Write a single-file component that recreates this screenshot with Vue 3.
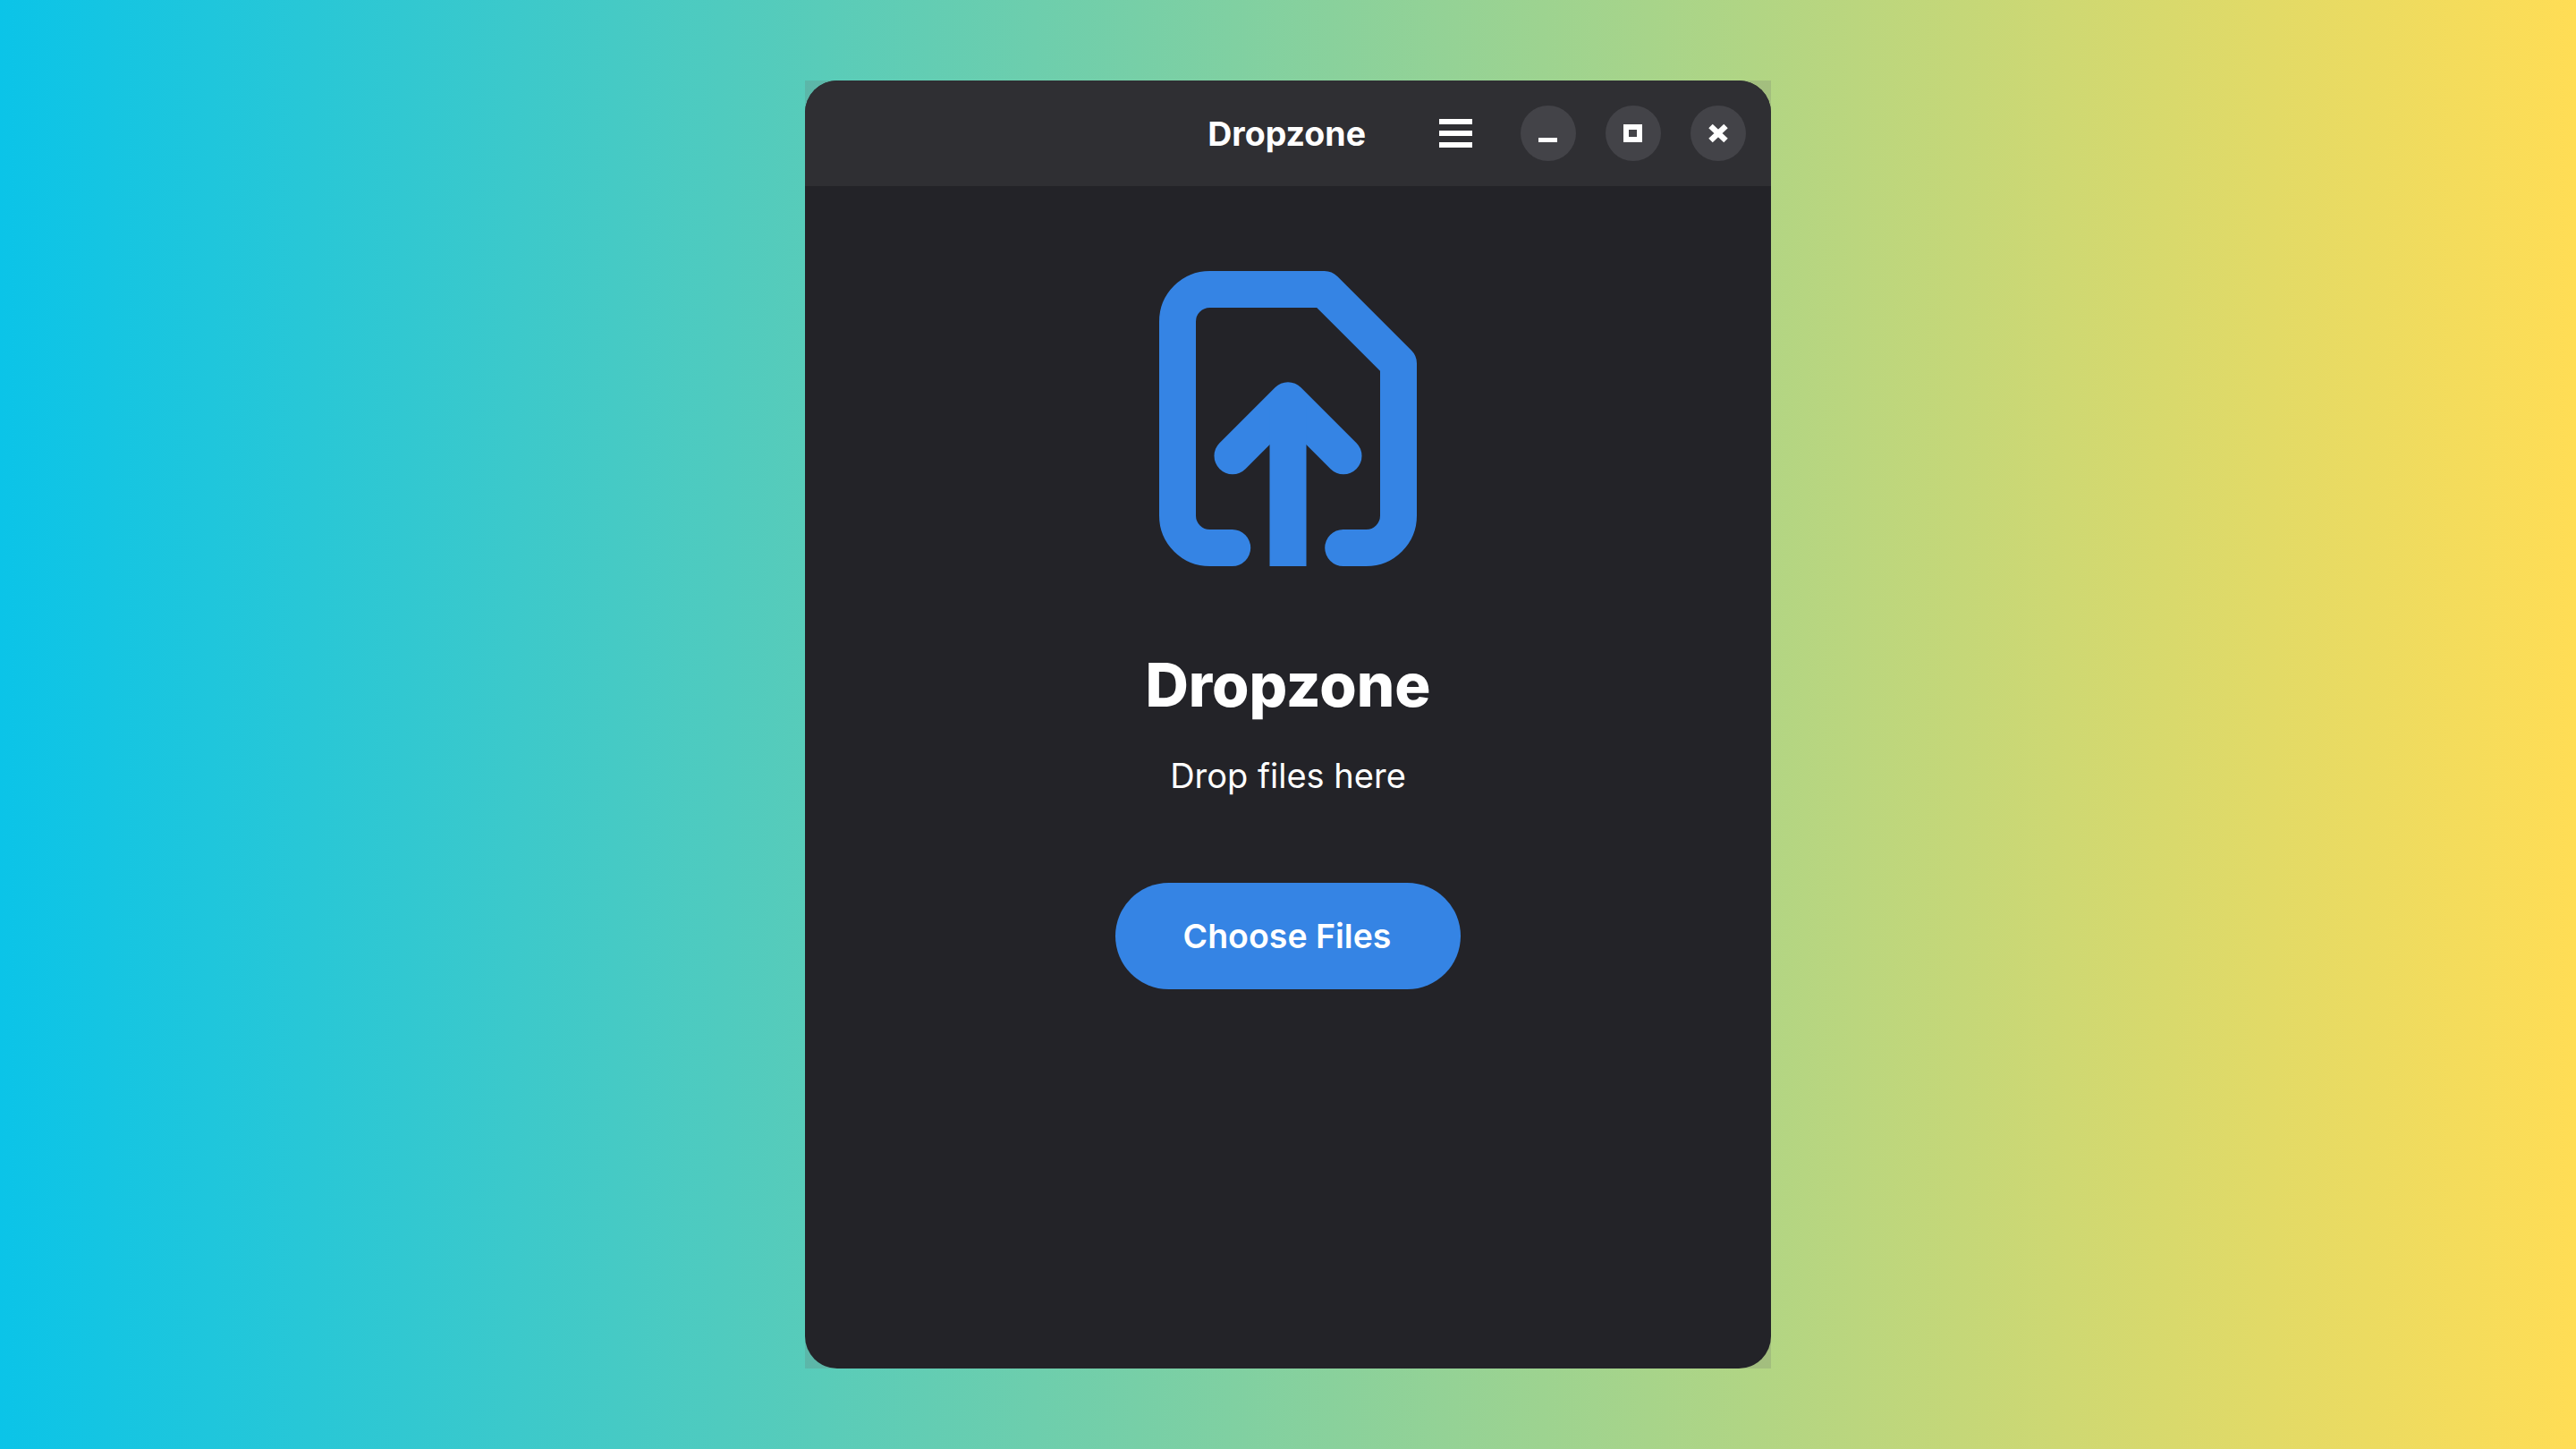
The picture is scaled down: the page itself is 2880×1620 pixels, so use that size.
<template>
  <div class="desktop">
    <div class="window-frame">
      <div class="window">
        <header class="headerbar">
          <span class="headerbar__title">Dropzone</span>
          <button class="headerbar__menu" type="button" aria-label="Menu">
            <i /><i /><i />
          </button>
          <div class="headerbar__controls">
            <button class="control" type="button" aria-label="Minimize">
              <svg width="62" height="62" viewBox="0 0 62 62"><rect x="20" y="36" width="21" height="5" fill="#fff" /></svg>
            </button>
            <button class="control" type="button" aria-label="Maximize">
              <svg width="62" height="62" viewBox="0 0 62 62"><rect x="23" y="24" width="15" height="14" fill="none" stroke="#fff" stroke-width="6" /></svg>
            </button>
            <button class="control" type="button" aria-label="Close">
              <svg width="62" height="62" viewBox="0 0 62 62"><path d="M22.5 23 39.5 39M39.5 23 22.5 39" fill="none" stroke="#fff" stroke-width="6.5" /></svg>
            </button>
          </div>
        </header>

        <main class="content">
          <svg class="content__icon" width="288" height="330" viewBox="0 0 288 330" fill="none" stroke="#3584e4" stroke-width="41">
            <path
              stroke-linecap="round"
              stroke-linejoin="round"
              d="M81.7 309.5H56.5a36 36 0 0 1-36-36V56.5a36 36 0 0 1 36-36H184.7L267.5 103.3V273.5a36 36 0 0 1-36 36H205.7"
            />
            <path stroke-linecap="round" stroke-linejoin="round" d="M82 206.7 144 144.7 206 206.7" />
            <path d="M144 150V330" />
          </svg>
          <h1 class="content__title">Dropzone</h1>
          <p class="content__text">Drop files here</p>
          <button class="content__button" type="button">Choose Files</button>
        </main>
      </div>
    </div>
  </div>
</template>

<script setup>
</script>

<style>
body {
  margin: 0;
}
</style>

<style scoped>
.desktop {
  width: 2880px;
  height: 1620px;
  display: flex;
  align-items: center;
  justify-content: center;
  background: linear-gradient(90deg, #0bc4e8, #ffdd55);
  font-family: Inter, "Noto Sans", sans-serif;
  color: #fff;
}

.window-frame {
  width: 1080px;
  height: 1440px;
  background: rgba(110, 110, 110, 0.22);
}

.window {
  height: 100%;
  display: flex;
  flex-direction: column;
  border-radius: 36px;
  overflow: hidden;
  background: #232328;
}

.headerbar {
  flex: none;
  height: 118px;
  box-sizing: border-box;
  padding: 0 28px;
  display: flex;
  align-items: center;
  justify-content: flex-end;
  background: #2f2f33;
}

.headerbar__title {
  font-size: 37.5px;
  font-weight: 700;
  margin-right: 82px;
}

.headerbar__menu {
  width: 37px;
  height: 32px;
  margin-right: 54px;
  padding: 0;
  border: 0;
  background: none;
  display: flex;
  flex-direction: column;
  justify-content: space-between;
}

.headerbar__menu i {
  display: block;
  width: 100%;
  height: 6px;
  background: #fff;
}

.headerbar__controls {
  display: flex;
  gap: 33px;
}

.control {
  width: 62px;
  height: 62px;
  padding: 0;
  border: 0;
  border-radius: 50%;
  background: #434348;
}

.control svg {
  display: block;
}

.content {
  flex: 1;
  display: flex;
  flex-direction: column;
  align-items: center;
  padding-top: 95px;
}

.content__icon {
  display: block;
}

.content__title {
  margin: 90px 0 0;
  font-size: 67px;
  line-height: 86px;
  font-weight: 800;
}

.content__text {
  margin: 35px 0 0;
  font-size: 38px;
  line-height: 46px;
  font-weight: 400;
}

.content__button {
  margin-top: 97px;
  width: 386px;
  height: 119px;
  padding: 0 2px 0 0;
  border: 0;
  border-radius: 60px;
  background: #3584e4;
  color: #fff;
  font-family: inherit;
  font-size: 37.5px;
  font-weight: 600;
}
</style>
